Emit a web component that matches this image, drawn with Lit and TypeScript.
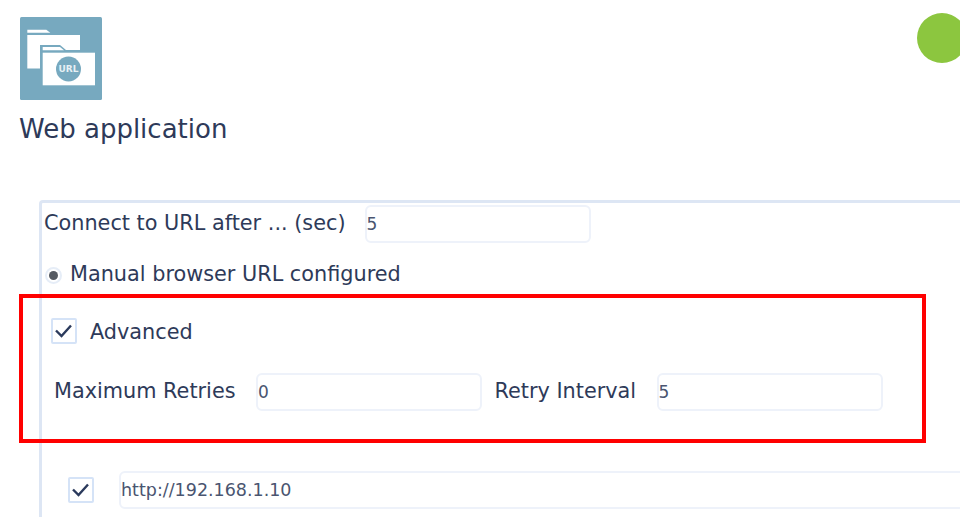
import { LitElement, html, css } from "lit";
import { customElement } from "lit/decorators.js";

const check = html`<svg viewBox="0 0 26 26" width="26" height="26"><path d="M5 12.500l5.500 5.500 9.500-10.500" fill="none" stroke="#2b3a5c" stroke-width="2.400"/></svg>`;

@customElement("app-root")
export class AppRoot extends LitElement {
  static styles = css`
    :host { display: block; width: 960px; height: 517px; overflow: hidden; position: relative; background: #fff;
      font-family: "DejaVu Sans", sans-serif; color: #2e3a59; font-size: 20.8px; }
    .page { padding: 17px 0 0 20px; display: flex; flex-direction: column; width: 1100px; }
    .logo { display: block; width: 82px; height: 83px; }
    h1 { margin: 12px 0 0 -1px; font-size: 26px; font-weight: 400; line-height: 34px; height: 34px; }
    .box { margin: 54px 0 0 19px; border: 3px solid #dde6f4; border-right: 0; border-bottom: 0; border-radius: 4px 0 0 0;
      padding: 2px 0 0 2px; height: 330px; display: flex; flex-direction: column; }
    .row { display: flex; align-items: center; }
    .label { padding-bottom: 2px; white-space: nowrap; }
    .field { box-sizing: border-box; width: 226px; height: 38px; border: 2px solid #eef2fa; border-radius: 6px; font-size: 17px; padding-left: 0; color: #4a5570; display: flex; align-items: center; }
    .r1 { gap: 19px; height: 38px; }
    .r2 { margin: 12px 0 0 1px; gap: 8px; height: 38px; }
    .r2 .label { padding-bottom: 0; }
    .radio { width: 17px; height: 17px; margin-top: 2px; border-radius: 50%; border: 2px solid #e6edf7; box-sizing: border-box; display: flex; align-items: center; justify-content: center; }
    .radio i { width: 9px; height: 9px; border-radius: 50%; background: #555a62; }
    .cb { box-sizing: border-box; width: 26px; height: 26px; border: 2px solid #d5e3f7; border-radius: 2px; flex: none; display: flex; align-items: center; justify-content: center; }
    .cb svg { flex: none; margin: -2px; }
    .r3 { margin: 25px 0 0 7px; gap: 13px; height: 26px; }
    .r3 .label { padding: 2px 0 0; }
    .r4 { margin: 29px 0 0 10px; gap: 20.500px; height: 38px; }
    .r4 .f2 { margin-left: -8px; }
    .r5 { margin: 60px 0 0 25px; gap: 25px; height: 38px; }
    .r5 .cb { margin-left: -1px; }
    .r5 .field { width: 900px; font-size: 17.500px; }
    .dot { position: absolute; left: 917px; top: 13px; width: 50px; height: 50px; border-radius: 50%; background: #8cc63f; }
    .mark { position: absolute; left: 19px; top: 294px; width: 907px; height: 149px; box-sizing: border-box; border: 4px solid #f00; }
  `;
  render() {
    return html`
      <div class="page">
        <svg class="logo" viewBox="0 0 82 83">
          <rect width="82" height="83" rx="1.500" fill="#77a9bf"/>
          <path d="M7.300 12.700h19l4 3H7.300z" fill="#fff"/>
          <rect x="7.300" y="18" width="52.700" height="33.500" fill="#fff"/>
          <path d="M20 28h20l6 5H76v36H20z" fill="#77a9bf"/>
          <path d="M22.700 30h17.300l4 3.300H22.700z" fill="#fff"/>
          <rect x="22.700" y="35.700" width="52.300" height="32.600" fill="#fff"/>
          <circle cx="48.500" cy="52" r="12.500" fill="#77a9bf"/>
          <text x="48.500" y="55.300" text-anchor="middle" font-size="9" font-weight="700" fill="#e6f0f4" font-family="DejaVu Sans">URL</text>
        </svg>
        <h1>Web application</h1>
        <div class="box">
          <div class="row r1"><span class="label">Connect to URL after ... (sec)</span><div class="field">5</div></div>
          <div class="row r2"><span class="radio"><i></i></span><span class="label">Manual browser URL configured</span></div>
          <div class="row r3"><span class="cb">${check}</span><span class="label">Advanced</span></div>
          <div class="row r4"><span class="label">Maximum Retries</span><div class="field">0</div><span class="label f2">Retry Interval</span><div class="field">5</div></div>
          <div class="row r5"><span class="cb">${check}</span><div class="field">http://192.168.1.10</div></div>
        </div>
      </div>
      <div class="dot"></div>
      <div class="mark"></div>
    `;
  }
}
